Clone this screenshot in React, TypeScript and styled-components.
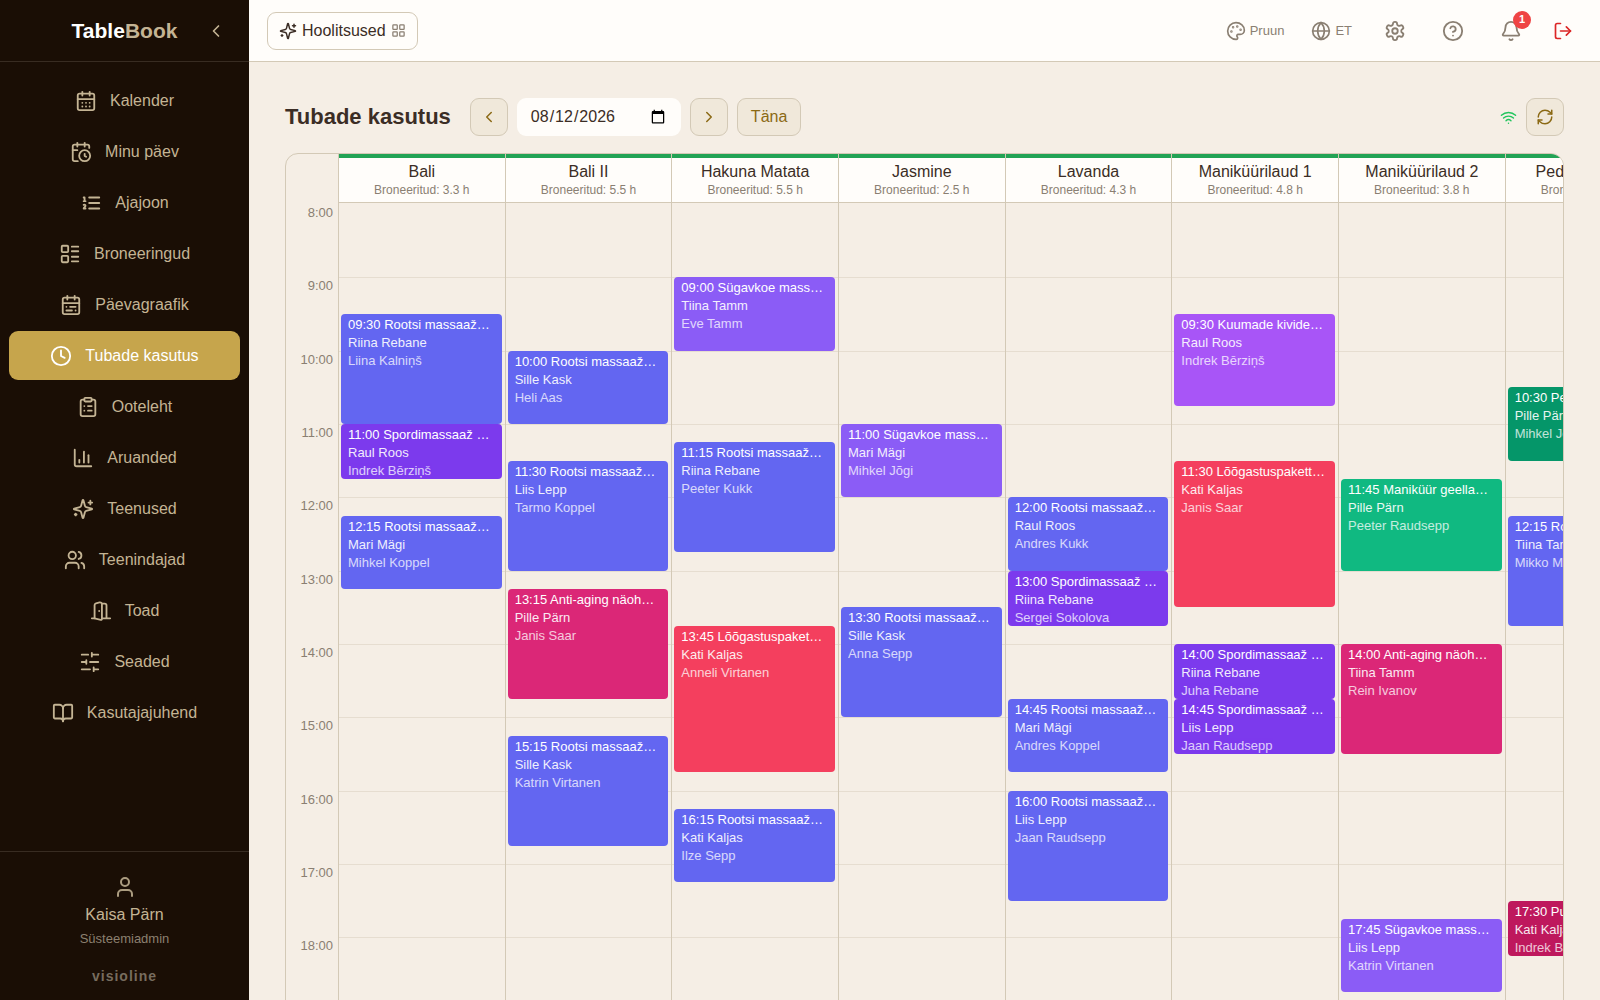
import React, { useState } from "react";
import styled, { createGlobalStyle, css } from "styled-components";
import {
  Bell,
  BookOpen,
  CalendarClock,
  CalendarDays,
  CalendarRange,
  ChartColumn,
  ChevronLeft,
  ChevronRight,
  CircleHelp,
  ClipboardList,
  Clock,
  Globe,
  LayoutGrid,
  LayoutList,
  LogOut,
  Palette,
  RefreshCw,
  User,
  Users,
  Wifi,
} from "lucide-react";

const color = {
  sidebar: "#1a0e05",
  sidebarLine: "#382c22",
  sidebarText: "#c4b494",
  sidebarMuted: "#8c8070",
  gold: "#c6a54c",
  page: "#f5eee5",
  surface: "#fffdfa",
  line: "#d3c9b6",
  softLine: "#e6ddd0",
  button: "#f0e8da",
  accent: "#8b6914",
  text: "#3b2d25",
  muted: "#8a7f72",
};

const GlobalStyle = createGlobalStyle`
  *, *::before, *::after { box-sizing: border-box; }
  body {
    margin: 0;
    background: ${color.page};
    color: ${color.text};
    font-family: "Liberation Sans", Arial, sans-serif;
    font-size: 16px;
  }
  button, input { font: inherit; color: inherit; }
  button { cursor: pointer; }
`;

/* Icons that the package draws differently */

type IconProps = { size?: number; strokeWidth?: number };

const makeIcon =
  (shapes: React.ReactNode) =>
  ({ size = 24, strokeWidth = 2 }: IconProps) => (
    <svg
      width={size}
      height={size}
      viewBox="0 0 24 24"
      fill="none"
      stroke="currentColor"
      strokeWidth={strokeWidth}
      strokeLinecap="round"
      strokeLinejoin="round"
      aria-hidden="true"
    >
      {shapes}
    </svg>
  );

const Sparkles = makeIcon(
  <>
    <path d="M9.937 15.5A2 2 0 0 0 8.5 14.063l-6.135-1.582a.5.5 0 0 1 0-.962L8.5 9.936A2 2 0 0 0 9.937 8.5l1.582-6.135a.5.5 0 0 1 .963 0L14.063 8.5A2 2 0 0 0 15.5 9.937l6.135 1.581a.5.5 0 0 1 0 .964L15.5 14.063a2 2 0 0 0-1.437 1.437l-1.582 6.135a.5.5 0 0 1-.963 0z" />
    <path d="M20 3v4M22 5h-4M4 17v2M5 18H3" />
  </>
);

const NumberedList = makeIcon(
  <path d="M10 12h11M10 18h11M10 6h11M4 10h2M4 6h1v4M6 18H4c0-1 2-2 2-3s-1-1.5-2-1" />
);

const Sliders = makeIcon(
  <path d="M21 4h-7M10 4H3M21 12h-9M8 12H3M21 20h-5M12 20H3M14 2v4M8 10v4M16 18v4" />
);

const Door = makeIcon(
  <>
    <path d="M13 4h3a2 2 0 0 1 2 2v14M2 20h3M13 20h9M10 12v.01" />
    <path d="M13 4.562v16.157a1 1 0 0 1-1.242.97L5 20V5.562a2 2 0 0 1 1.515-1.94l4-1A2 2 0 0 1 13 4.561Z" />
  </>
);

const Gear = makeIcon(
  <>
    <path d="M12.22 2h-.44a2 2 0 0 0-2 2v.18a2 2 0 0 1-1 1.73l-.43.25a2 2 0 0 1-2 0l-.15-.08a2 2 0 0 0-2.73.73l-.22.38a2 2 0 0 0 .73 2.73l.15.1a2 2 0 0 1 1 1.72v.51a2 2 0 0 1-1 1.74l-.15.09a2 2 0 0 0-.73 2.73l.22.38a2 2 0 0 0 2.73.73l.15-.08a2 2 0 0 1 2 0l.43.25a2 2 0 0 1 1 1.73V20a2 2 0 0 0 2 2h.44a2 2 0 0 0 2-2v-.18a2 2 0 0 1 1-1.73l.43-.25a2 2 0 0 1 2 0l.15.08a2 2 0 0 0 2.73-.73l.22-.39a2 2 0 0 0-.73-2.73l-.15-.08a2 2 0 0 1-1-1.74v-.5a2 2 0 0 1 1-1.74l.15-.09a2 2 0 0 0 .73-2.73l-.22-.38a2 2 0 0 0-2.73-.73l-.15.08a2 2 0 0 1-2 0l-.43-.25a2 2 0 0 1-1-1.73V4a2 2 0 0 0-2-2z" />
    <circle cx="12" cy="12" r="3" />
  </>
);

const Shell = styled.div`
  display: grid;
  grid-template-columns: 249px minmax(0, 1fr);
  height: 100vh;
`;

/* Sidebar */

const Sidebar = styled.aside`
  display: flex;
  flex-direction: column;
  min-height: 0;
  background: ${color.sidebar};
  color: ${color.sidebarText};
`;

const Brand = styled.div`
  display: grid;
  grid-template-columns: 48px 1fr 48px;
  align-items: center;
  height: 62px;
  padding: 0 9px;
  border-bottom: 1px solid ${color.sidebarLine};
`;

const BrandName = styled.div`
  grid-column: 2;
  text-align: center;
  font-size: 21px;
  font-weight: 700;
  color: #ffffff;

  span {
    color: ${color.sidebarText};
  }
`;

const CollapseButton = styled.button`
  display: flex;
  justify-content: center;
  padding: 9px;
  border: 0;
  background: none;
`;

const Nav = styled.nav`
  display: flex;
  flex: 1;
  flex-direction: column;
  gap: 2px;
  min-height: 0;
  padding: 14px 9px;
`;

const NavLink = styled.a<{ $active?: boolean }>`
  display: flex;
  align-items: center;
  justify-content: center;
  gap: 13px;
  height: 49px;
  flex-shrink: 0;
  border-radius: 9px;
  color: inherit;
  text-decoration: none;
  ${(p) =>
    p.$active &&
    css`
      background: ${color.gold};
      color: #ffffff;
    `}
`;

const Account = styled.div`
  display: flex;
  flex-direction: column;
  align-items: center;
  padding: 23px 9px 14px;
  border-top: 1px solid ${color.sidebarLine};

  svg {
    color: #ab9c80;
  }
`;

const AccountName = styled.div`
  margin-top: 4px;
  line-height: 24px;
`;

const AccountRole = styled.div`
  font-size: 13px;
  line-height: 24px;
  color: ${color.sidebarMuted};
`;

const Vendor = styled.div`
  margin-top: 15px;
  font-size: 14px;
  font-weight: 700;
  line-height: 20px;
  letter-spacing: 1px;
  color: #776c5e;
`;

/* Top bar */

const Content = styled.div`
  display: flex;
  flex-direction: column;
  min-height: 0;
`;

const TopBar = styled.header`
  display: flex;
  flex-shrink: 0;
  align-items: center;
  justify-content: space-between;
  height: 62px;
  padding: 0 18px;
  background: ${color.surface};
  border-bottom: 1px solid ${color.line};
`;

const SectionButton = styled.button`
  display: flex;
  align-items: center;
  gap: 5px;
  height: 38px;
  padding: 0 11px;
  border: 1px solid ${color.line};
  border-radius: 9px;
  background: ${color.surface};

  svg:last-child {
    color: ${color.muted};
  }
`;

const TopActions = styled.div`
  display: flex;
  align-items: center;
  gap: 9px;
`;

const TopAction = styled.button<{ $kind?: "label" | "exit" }>`
  position: relative;
  display: flex;
  align-items: center;
  justify-content: center;
  gap: 4px;
  width: ${(p) => (p.$kind === "label" ? "auto" : p.$kind === "exit" ? "38px" : "49px")};
  height: 40px;
  padding: 0 ${(p) => (p.$kind === "label" ? "9px" : "0")};
  border: 0;
  background: none;
  font-size: 13px;
  color: ${(p) => (p.$kind === "exit" ? "#dc2626" : color.muted)};
`;

const Badge = styled.span`
  position: absolute;
  top: 0;
  right: 4px;
  width: 18px;
  height: 18px;
  border-radius: 9px;
  background: #ef4444;
  color: #ffffff;
  font-size: 11px;
  font-weight: 700;
  line-height: 17px;
  text-align: center;
`;

/* Page */

const Page = styled.main`
  flex: 1;
  min-height: 0;
  padding: 36px;
  overflow-y: auto;
  scrollbar-width: none;
`;

const Toolbar = styled.div`
  display: flex;
  align-items: center;
  gap: 9px;
  margin-bottom: 17px;
`;

const Title = styled.h1`
  margin: 0 10px 0 0;
  font-size: 22px;
  font-weight: 700;
  line-height: 28px;
`;

const ToolButton = styled.button<{ $wide?: boolean }>`
  display: flex;
  align-items: center;
  justify-content: center;
  width: ${(p) => (p.$wide ? "auto" : "38px")};
  height: 38px;
  padding: 0 ${(p) => (p.$wide ? "13px" : "0")};
  border: 1px solid ${color.line};
  border-radius: 9px;
  background: ${color.button};
  color: ${color.accent};
`;

const DateInput = styled.input`
  width: 164px;
  height: 38px;
  padding: 0 13px;
  border: 0;
  border-radius: 9px;
  background: ${color.surface};
`;

const SyncGroup = styled.div`
  display: flex;
  align-items: center;
  gap: 9px;
  margin-left: auto;
  color: #22c55e;
`;

/* Schedule */

const Card = styled.section`
  border: 1px solid ${color.line};
  border-radius: 13px;
  overflow-x: auto;
  overflow-y: hidden;
  scrollbar-width: none;
`;

const Schedule = styled.div`
  display: grid;
  grid-template-columns: 52px 1500px;
  width: max-content;
`;

const RoomHeaders = styled.div`
  display: grid;
  grid-column: 2;
  grid-template-columns: repeat(9, minmax(0, 1fr));
`;

const RoomHeader = styled.div`
  padding: 8px 0 4px;
  border-left: 1px solid ${color.line};
  border-bottom: 1px solid ${color.line};
  background: linear-gradient(#22a355 4px, ${color.surface} 4px);
  text-align: center;
`;

const RoomName = styled.h2`
  margin: 0;
  font-size: 16px;
  font-weight: 400;
  line-height: 20px;
`;

const RoomLoad = styled.div`
  font-size: 12px;
  line-height: 16px;
  color: ${color.muted};
`;

const HourAxis = styled.div`
  display: grid;
  grid-template-rows: repeat(12, minmax(0, 1fr));
  height: 881px;
  padding: 1px 5px 0 0;
  font-size: 13px;
  line-height: 18px;
  text-align: right;
  color: ${color.muted};
`;

const RoomColumns = styled.div`
  display: grid;
  grid-template-columns: repeat(9, minmax(0, 1fr));
`;

const RoomColumn = styled.div`
  display: grid;
  grid-template-columns: 2px minmax(0, 1fr) 3px;
  grid-template-rows: repeat(48, minmax(0, 1fr));
  height: 881px;
  padding-top: 1px;
  border-left: 1px solid ${color.line};
`;

const HourLine = styled.div<{ $hour: number }>`
  grid-column: 1 / -1;
  grid-row: ${(p) => p.$hour * 4 + 1} / span 4;
  border-top: 1px solid ${color.softLine};
`;

const EventBlock = styled.button<{ $start: number; $end: number; $fill: string }>`
  display: flex;
  flex-direction: column;
  grid-column: 2;
  grid-row: ${(p) => p.$start + 1} / ${(p) => p.$end + 1};
  min-height: 0;
  padding: 2px 10px 0 7px;
  border: 0;
  border-radius: 4px;
  background: ${(p) => p.$fill};
  color: #ffffff;
  font-size: 13px;
  line-height: 18px;
  text-align: left;
  overflow: hidden;
`;

const EventLine = styled.span<{ $tone?: "staff" | "client" }>`
  flex-shrink: 0;
  width: 100%;
  overflow: hidden;
  text-overflow: ellipsis;
  white-space: nowrap;
  opacity: ${(p) => (p.$tone === "client" ? 0.75 : p.$tone === "staff" ? 0.9 : 1)};
`;

const NAV = [
  { label: "Kalender", Icon: CalendarDays },
  { label: "Minu päev", Icon: CalendarClock },
  { label: "Ajajoon", Icon: NumberedList },
  { label: "Broneeringud", Icon: LayoutList },
  { label: "Päevagraafik", Icon: CalendarRange },
  { label: "Tubade kasutus", Icon: Clock, active: true },
  { label: "Ooteleht", Icon: ClipboardList },
  { label: "Aruanded", Icon: ChartColumn },
  { label: "Teenused", Icon: Sparkles },
  { label: "Teenindajad", Icon: Users },
  { label: "Toad", Icon: Door },
  { label: "Seaded", Icon: Sliders },
  { label: "Kasutajajuhend", Icon: BookOpen },
];

const SERVICES = {
  rootsi: { name: "Rootsi massaaž 60 min", fill: "#6366f1" },
  spordi: { name: "Spordimassaaž mini", fill: "#7c3aed" },
  sugav: { name: "Sügavkoe massaaž", fill: "#8b5cf6" },
  anti: { name: "Anti-aging näohooldus", fill: "#db2777" },
  pakett: { name: "Lõõgastuspakett kahele", fill: "#f43f5e" },
  kivid: { name: "Kuumade kividega massaaž", fill: "#a855f7" },
  geel: { name: "Maniküür geellakiga", fill: "#10b981" },
  pedi: { name: "Pediküür geellakiga", fill: "#059669" },
  puhastus: { name: "Puhastav jalahooldus", fill: "#be185d" },
};

type Booking = [string, string, keyof typeof SERVICES, string, string];

const ROOMS: { name: string; load: string; bookings: Booking[] }[] = [
  {
    name: "Bali",
    load: "3.3",
    bookings: [
      ["09:30", "11:00", "rootsi", "Riina Rebane", "Liina Kalniņš"],
      ["11:00", "11:45", "spordi", "Raul Roos", "Indrek Bērziņš"],
      ["12:15", "13:15", "rootsi", "Mari Mägi", "Mihkel Koppel"],
    ],
  },
  {
    name: "Bali II",
    load: "5.5",
    bookings: [
      ["10:00", "11:00", "rootsi", "Sille Kask", "Heli Aas"],
      ["11:30", "13:00", "rootsi", "Liis Lepp", "Tarmo Koppel"],
      ["13:15", "14:45", "anti", "Pille Pärn", "Janis Saar"],
      ["15:15", "16:45", "rootsi", "Sille Kask", "Katrin Virtanen"],
    ],
  },
  {
    name: "Hakuna Matata",
    load: "5.5",
    bookings: [
      ["09:00", "10:00", "sugav", "Tiina Tamm", "Eve Tamm"],
      ["11:15", "12:45", "rootsi", "Riina Rebane", "Peeter Kukk"],
      ["13:45", "15:45", "pakett", "Kati Kaljas", "Anneli Virtanen"],
      ["16:15", "17:15", "rootsi", "Kati Kaljas", "Ilze Sepp"],
    ],
  },
  {
    name: "Jasmine",
    load: "2.5",
    bookings: [
      ["11:00", "12:00", "sugav", "Mari Mägi", "Mihkel Jõgi"],
      ["13:30", "15:00", "rootsi", "Sille Kask", "Anna Sepp"],
    ],
  },
  {
    name: "Lavanda",
    load: "4.3",
    bookings: [
      ["12:00", "13:00", "rootsi", "Raul Roos", "Andres Kukk"],
      ["13:00", "13:45", "spordi", "Riina Rebane", "Sergei Sokolova"],
      ["14:45", "15:45", "rootsi", "Mari Mägi", "Andres Koppel"],
      ["16:00", "17:30", "rootsi", "Liis Lepp", "Jaan Raudsepp"],
    ],
  },
  {
    name: "Maniküürilaud 1",
    load: "4.8",
    bookings: [
      ["09:30", "10:45", "kivid", "Raul Roos", "Indrek Bērziņš"],
      ["11:30", "13:30", "pakett", "Kati Kaljas", "Janis Saar"],
      ["14:00", "14:45", "spordi", "Riina Rebane", "Juha Rebane"],
      ["14:45", "15:30", "spordi", "Liis Lepp", "Jaan Raudsepp"],
    ],
  },
  {
    name: "Maniküürilaud 2",
    load: "3.8",
    bookings: [
      ["11:45", "13:00", "geel", "Pille Pärn", "Peeter Raudsepp"],
      ["14:00", "15:30", "anti", "Tiina Tamm", "Rein Ivanov"],
      ["17:45", "18:45", "sugav", "Liis Lepp", "Katrin Virtanen"],
    ],
  },
  {
    name: "Pediküüritool 1",
    load: "3.3",
    bookings: [
      ["10:30", "11:30", "pedi", "Pille Pärn", "Mihkel Jõgi"],
      ["12:15", "13:45", "rootsi", "Tiina Tamm", "Mikko Mägi"],
      ["17:30", "18:15", "puhastus", "Kati Kaljas", "Indrek Bērziņš"],
    ],
  },
  { name: "Pediküüritool 2", load: "0.0", bookings: [] },
];

const FIRST_HOUR = 8;
const HOURS = Array.from({ length: 12 }, (_, i) => FIRST_HOUR + i);

/* Number of quarter hours between the opening hour and the given time. */
const quarter = (time: string) => {
  const [h, m] = time.split(":").map(Number);
  return (h - FIRST_HOUR) * 4 + m / 15;
};

export default function App() {
  const [date, setDate] = useState("2026-08-12");

  return (
    <>
      <GlobalStyle />
      <Shell>
        <Sidebar>
          <Brand>
            <BrandName>
              Table<span>Book</span>
            </BrandName>
            <CollapseButton aria-label="Ahenda menüü">
              <ChevronLeft size={20} />
            </CollapseButton>
          </Brand>
          <Nav>
            {NAV.map(({ label, Icon, active }) => (
              <NavLink key={label} href="#" $active={active} aria-current={active ? "page" : undefined}>
                <Icon size={22} strokeWidth={2} />
                {label}
              </NavLink>
            ))}
          </Nav>
          <Account>
            <User size={24} strokeWidth={2} />
            <AccountName>Kaisa Pärn</AccountName>
            <AccountRole>Süsteemiadmin</AccountRole>
            <Vendor>visioline</Vendor>
          </Account>
        </Sidebar>

        <Content>
          <TopBar>
            <SectionButton>
              <Sparkles size={18} />
              Hoolitsused
              <LayoutGrid size={15} />
            </SectionButton>
            <TopActions>
              <TopAction $kind="label">
                <Palette size={20} />
                Pruun
              </TopAction>
              <TopAction $kind="label">
                <Globe size={20} />
                ET
              </TopAction>
              <TopAction aria-label="Seaded">
                <Gear size={22} />
              </TopAction>
              <TopAction aria-label="Abi">
                <CircleHelp size={22} />
              </TopAction>
              <TopAction aria-label="Teavitused">
                <Bell size={22} />
                <Badge>1</Badge>
              </TopAction>
              <TopAction $kind="exit" aria-label="Logi välja">
                <LogOut size={20} />
              </TopAction>
            </TopActions>
          </TopBar>

          <Page>
            <Toolbar>
              <Title>Tubade kasutus</Title>
              <ToolButton aria-label="Eelmine päev">
                <ChevronLeft size={18} />
              </ToolButton>
              <DateInput
                type="date"
                aria-label="Kuupäev"
                value={date}
                onChange={(e) => setDate(e.target.value)}
              />
              <ToolButton aria-label="Järgmine päev">
                <ChevronRight size={18} />
              </ToolButton>
              <ToolButton $wide>Täna</ToolButton>
              <SyncGroup>
                <Wifi size={17} />
                <ToolButton aria-label="Värskenda">
                  <RefreshCw size={18} />
                </ToolButton>
              </SyncGroup>
            </Toolbar>

            <Card>
              <Schedule>
                <RoomHeaders>
                  {ROOMS.map((room) => (
                    <RoomHeader key={room.name}>
                      <RoomName>{room.name}</RoomName>
                      <RoomLoad>Broneeritud: {room.load} h</RoomLoad>
                    </RoomHeader>
                  ))}
                </RoomHeaders>
                <HourAxis>
                  {HOURS.map((hour) => (
                    <span key={hour}>{hour}:00</span>
                  ))}
                </HourAxis>
                <RoomColumns>
                  {ROOMS.map((room) => (
                    <RoomColumn key={room.name}>
                      {HOURS.slice(1).map((hour) => (
                        <HourLine key={hour} $hour={hour - FIRST_HOUR} />
                      ))}
                      {room.bookings.map(([start, end, service, staff, client]) => (
                        <EventBlock
                          key={start}
                          $start={quarter(start)}
                          $end={quarter(end)}
                          $fill={SERVICES[service].fill}
                        >
                          <EventLine>
                            {start} {SERVICES[service].name}
                          </EventLine>
                          <EventLine $tone="staff">{staff}</EventLine>
                          <EventLine $tone="client">{client}</EventLine>
                        </EventBlock>
                      ))}
                    </RoomColumn>
                  ))}
                </RoomColumns>
              </Schedule>
            </Card>
          </Page>
        </Content>
      </Shell>
    </>
  );
}
